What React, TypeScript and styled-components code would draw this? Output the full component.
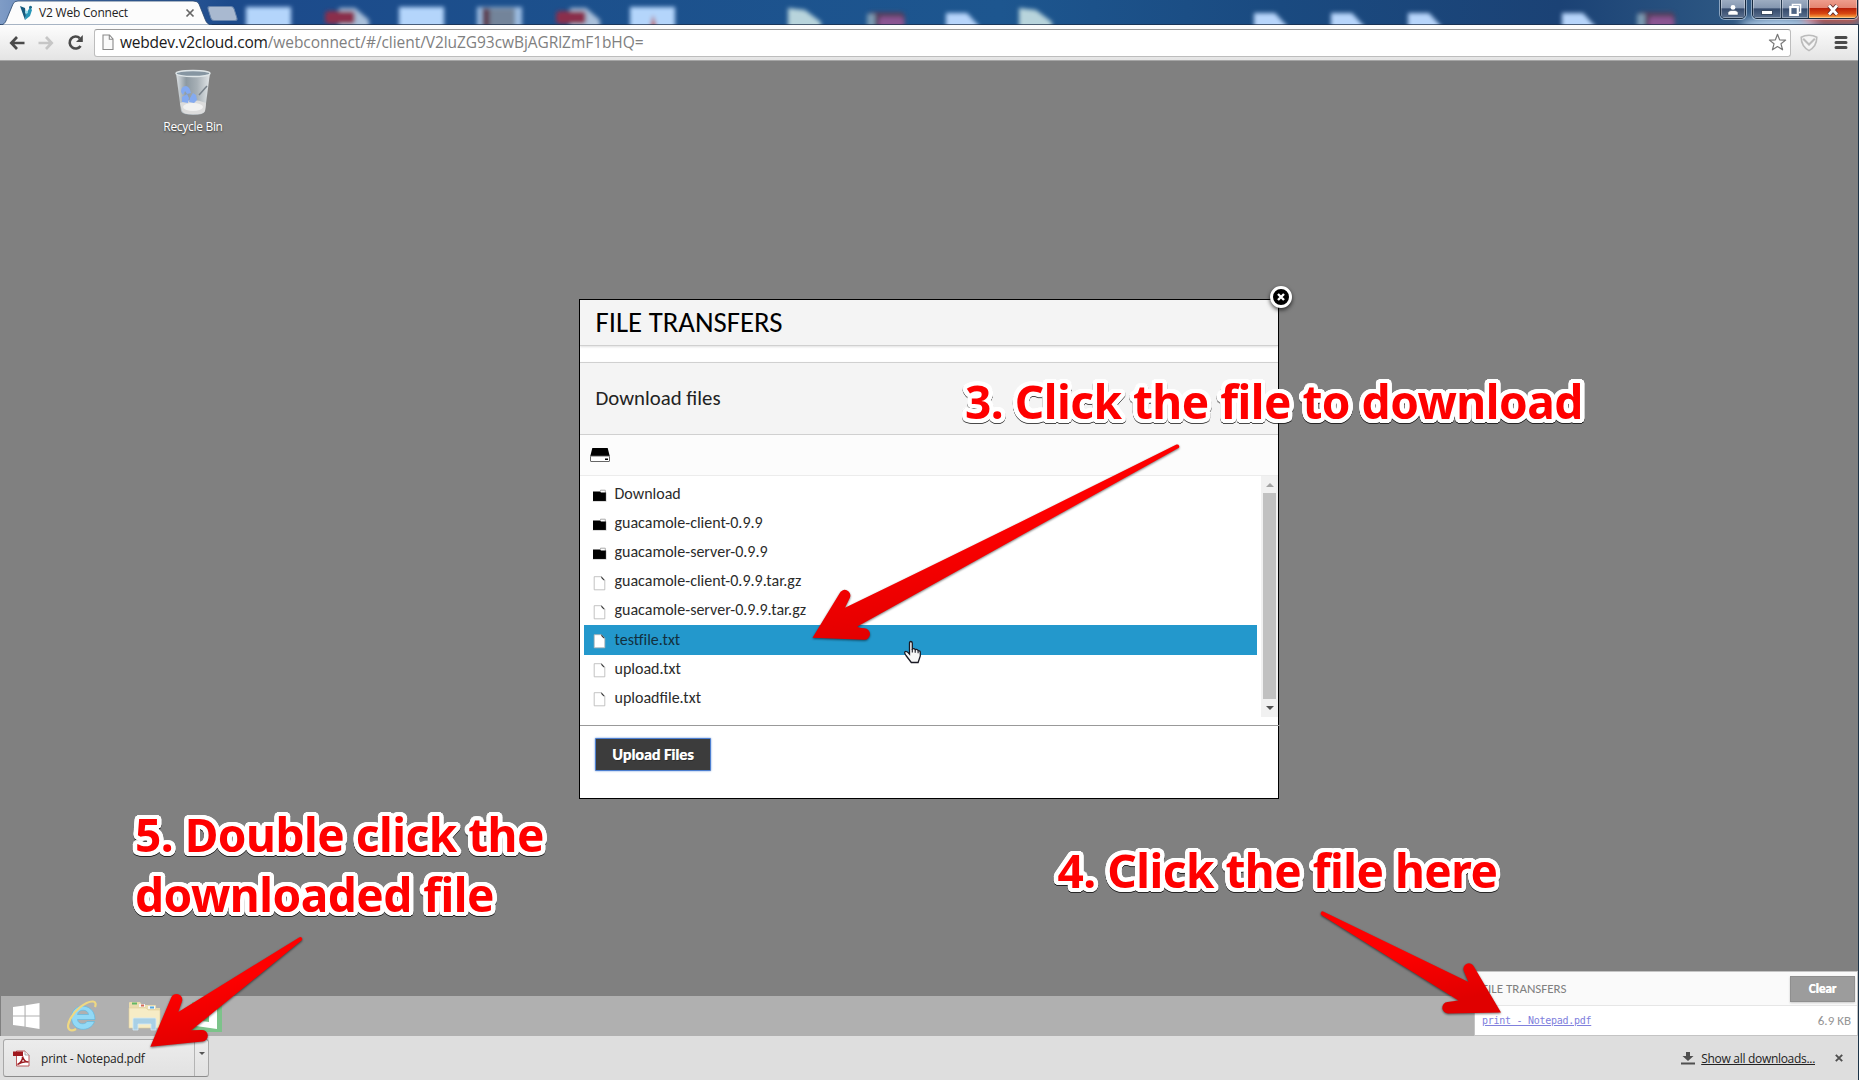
import React from 'react';
import styled, { createGlobalStyle } from 'styled-components';

const ui = '"Open Sans", "Noto Sans", sans-serif';
const lato = 'Carlito, Lato, sans-serif';

const GlobalStyle = createGlobalStyle`
  *, *::before, *::after { box-sizing: border-box; }
  body { margin: 0; overflow: hidden; }
`;

const BrowserWindow = styled.div`
  position: relative;
  display: flex;
  flex-direction: column;
  width: 1859px;
  height: 1080px;
  overflow: hidden;
  background: #1b3348;
  font-family: ${ui};
`;

/* ---------- title bar ---------- */

const TitleBar = styled.header`
  position: relative;
  display: flex;
  align-items: flex-start;
  flex: 0 0 25px;
  overflow: hidden;
  background: linear-gradient(90deg, #7f9cc6 0, #3f68a6 90px, #1c4a8b 230px, #1c4f8c 500px, #1d568f 1000px, #1a4a80 1280px, #1b4275 1560px, #2c5682 1720px, #56708c 1859px);
`;

const Wallpaper = styled.svg`
  position: absolute;
  inset: 0;
`;

const Tab = styled.div`
  position: relative;
  display: flex;
  align-items: center;
  width: 212px;
  height: 25px;
  padding: 0 17px 0 19px;
`;

const TabShape = styled.svg`
  position: absolute;
  left: 0;
  top: 0;
`;

const TabTitle = styled.span`
  position: relative;
  flex: 1;
  margin-left: 4px;
  color: #222;
  font-size: 12px;
  letter-spacing: -0.2px;
  white-space: nowrap;
`;

const TabIcon = styled.svg`
  position: relative;
  flex: none;
`;

const NewTab = styled.div`
  position: relative;
  width: 27px;
  height: 15px;
  margin: 6px 0 0 -3px;
  border: 1px solid #6884ab;
  border-radius: 3px;
  background: #a9b9d0;
  transform: skewX(17deg);
`;

const WindowControls = styled.div`
  position: relative;
  display: flex;
  gap: 6px;
  margin: -3px 1px 0 auto;
`;

const ControlGroup = styled.div`
  display: flex;
  height: 22px;
  overflow: hidden;
  border: 1px solid #17293e;
  border-radius: 0 0 5px 5px;
  box-shadow: 0 0 0 1px rgba(220, 232, 245, 0.55);
`;

const Control = styled.div<{ $width: number; $danger?: boolean }>`
  display: grid;
  place-items: center;
  width: ${(p) => p.$width}px;
  padding-top: 3px;
  border-right: 1px solid #25394f;
  box-shadow: inset 0 0 0 1px rgba(255, 255, 255, 0.35);
  background: ${(p) =>
    p.$danger
      ? 'linear-gradient(#f0a394 0, #e58572 48%, #b91f08 52%, #d84812 78%, #ffb24a 100%)'
      : 'linear-gradient(#a3b2c6 0, #8496b0 50%, #34496b 54%, #5b718f 100%)'};
  &:last-child { border-right: 0; }
`;

/* ---------- toolbar ---------- */

const Toolbar = styled.div`
  display: flex;
  align-items: center;
  flex: 0 0 36px;
  padding: 0 10px 0 9px;
  margin-right: 1px;
  border-bottom: 1px solid #a5a5a5;
  background: linear-gradient(#fdfdfd, #e4e4e4);
`;

const NavButtons = styled.div`
  display: flex;
  align-items: center;
  gap: 13px;
  width: 85px;
`;

const AddressBar = styled.div`
  display: flex;
  align-items: center;
  flex: 1;
  height: 28px;
  padding: 0 3px 0 7px;
  border: 1px solid #bdbdbd;
  border-top-color: #9a9a9a;
  border-radius: 3px;
  background: #fff;
`;

const Url = styled.div`
  flex: 1;
  margin: 0 0 1px 6px;
  color: #808080;
  font-size: 15.5px;
  letter-spacing: -0.06px;
  white-space: nowrap;
`;

const Host = styled.span`
  color: #1a1a1a;
  letter-spacing: -0.22px;
`;

const ToolbarIcons = styled.div`
  display: flex;
  align-items: center;
  gap: 16px;
  margin-left: 9px;
`;

/* ---------- remote desktop ---------- */

const Desktop = styled.main`
  position: relative;
  display: flex;
  flex-direction: column;
  justify-content: space-between;
  flex: 1;
  margin-right: 1px;
  background: #808080;
`;

const DesktopIcon = styled.div`
  display: flex;
  flex-direction: column;
  align-items: center;
  gap: 1px;
  width: 90px;
  margin: 8px 0 0 148px;
`;

const DesktopIconLabel = styled.span`
  color: #fff;
  font-size: 12px;
  line-height: 17px;
  letter-spacing: -0.3px;
  text-shadow: 0 1px 2px rgba(0, 0, 0, 0.6);
`;

const Taskbar = styled.div`
  display: flex;
  align-items: center;
  height: 40px;
  margin-left: 1px;
  padding-left: 12px;
  background: #b0b0b0;
`;

const TaskIcon = styled.svg<{ $after: number }>`
  flex: none;
  margin-right: ${(p) => p.$after}px;
`;

const ModalLayer = styled.div`
  position: absolute;
  inset: 0;
  display: grid;
  place-items: center;
`;

const Modal = styled.section`
  position: relative;
  display: flex;
  flex-direction: column;
  width: 700px;
  height: 500px;
  border: 1px solid #000;
  background: #fff;
  font-family: ${lato};
`;

const CloseBadge = styled.div`
  position: absolute;
  top: -14px;
  right: -14px;
  display: grid;
  place-items: center;
  width: 22px;
  height: 22px;
  border: 3px solid #fff;
  border-radius: 50%;
  background: #000;
  box-shadow: 0 2px 4px rgba(0, 0, 0, 0.7);
`;

const ModalHeader = styled.div`
  display: flex;
  align-items: center;
  flex: 0 0 46px;
  padding-left: 15.5px;
  border-bottom: 1px solid #d0d0d0;
  background: #f4f4f4;
  box-shadow: 0 1px 2px rgba(0, 0, 0, 0.12);
  color: #000;
  font-size: 28.8px;
`;

const SectionHeader = styled.div`
  display: flex;
  align-items: center;
  flex: 0 0 73px;
  margin-top: 16px;
  padding-left: 15.5px;
  border: solid #d0d0d0;
  border-width: 1px 0;
  background: #f4f4f4;
  box-shadow: 0 1px 2px rgba(0, 0, 0, 0.12);
  color: #222;
  font-size: 20.8px;
`;

const Breadcrumb = styled.div`
  display: flex;
  align-items: center;
  flex: 0 0 41px;
  padding-left: 10px;
  border-bottom: 1px solid #ececec;
  background: #fcfcfc;
`;

const ListArea = styled.div`
  display: flex;
  flex: 0 0 240px;
`;

const FileList = styled.ul`
  flex: 1;
  margin: 0;
  padding: 4px;
  list-style: none;
`;

const FileRow = styled.li<{ $active?: boolean }>`
  display: flex;
  align-items: center;
  gap: 8px;
  height: 29.2px;
  padding: 0 0 0 7.5px;
  background: ${(p) => (p.$active ? '#2398cc' : 'transparent')};
  color: ${(p) => (p.$active ? '#12303f' : '#2b2b2b')};
  font-size: 16px;
  & > svg { margin-top: 2px; }
`;

const FileName = styled.span`
  padding-bottom: 2px;
`;

const Scrollbar = styled.div`
  display: flex;
  flex-direction: column;
  align-items: center;
  width: 17px;
  background: #f1f1f1;
`;

const ScrollArrow = styled.div<{ $down?: boolean }>`
  flex: 0 0 17px;
  display: grid;
  place-items: center;
  padding: ${(p) => (p.$down ? '0 0 2px' : '2px 0 0')};
  &::after {
    content: '';
    border: solid transparent;
    border-width: ${(p) => (p.$down ? '4px 4px 0' : '0 4px 4px')};
    ${(p) => (p.$down ? 'border-top-color: #505050;' : 'border-bottom-color: #a3a3a3;')}
  }
`;

const ScrollThumb = styled.div`
  flex: 1;
  width: 13px;
  margin-bottom: 1px;
  background: #c1c1c1;
`;

const ModalFooter = styled.div`
  flex: 1;
  margin: 8px -2px 0 0;
  padding: 12px 15px;
  border-top: 1px solid #999;
`;

const UploadButton = styled.button`
  display: block;
  width: 116px;
  height: 33px;
  padding: 0;
  border: 1px solid #4d7fd0;
  border-radius: 1px;
  background: #3c3c3c;
  box-shadow: 0 0 2px #5a8ad6;
  color: #fff;
  font: bold 16px ${lato};
  text-shadow: 1px 1px 0 rgba(0, 0, 0, 0.3), 0.4px 0 0 #fff;
`;

const TransferPanel = styled.aside`
  position: absolute;
  right: 0;
  bottom: 0;
  width: 384px;
  height: 65px;
  border: 1px solid #c4c4c4;
  background: #fff;
  font-family: ${lato};
`;

const TransferHeader = styled.div`
  display: flex;
  align-items: center;
  justify-content: space-between;
  height: 34px;
  padding: 0 2px 0 7px;
  border-bottom: 1px solid #e6e6e6;
  background: #fafafa;
  color: #808080;
  font-size: 13px;
`;

const ClearButton = styled.button`
  width: 65px;
  height: 26px;
  padding: 0;
  border: 1px solid #8f8f8f;
  background: #9c9c9c;
  box-shadow: 0 1px 2px rgba(0, 0, 0, 0.2);
  color: #fff;
  font: bold 13px ${lato};
  text-shadow: 0.4px 0 0 #fff;
`;

const TransferRow = styled.div`
  display: flex;
  align-items: center;
  justify-content: space-between;
  height: 28px;
  padding: 0 6px 0 7px;
  color: #959595;
  font-size: 13px;
`;

const TransferLink = styled.a`
  margin-top: 2px;
  color: #8080dd;
  font: 10px/14px "DejaVu Sans Mono", monospace;
  letter-spacing: -0.27px;
  text-decoration: underline;
`;

/* ---------- download shelf ---------- */

const Shelf = styled.footer`
  display: flex;
  align-items: center;
  flex: 0 0 44px;
  margin-right: 1px;
  padding: 0 15px 0 3px;
  background: #dedede;
`;

const ShelfItem = styled.div`
  display: flex;
  align-items: center;
  width: 206px;
  height: 38px;
  padding-left: 9px;
  border: 1px solid #a8a8a8;
  border-bottom-color: #8c8c8c;
  border-radius: 3px;
  background: linear-gradient(#ececec, #e2e2e2);
`;

const ShelfName = styled.span`
  flex: 1;
  margin-left: 11px;
  color: #222;
  font-size: 12px;
  letter-spacing: -0.2px;
`;

const ShelfMenu = styled.div`
  align-self: stretch;
  display: grid;
  justify-items: center;
  width: 14px;
  padding-top: 12px;
  border-left: 1px solid #b4b4b4;
  &::after {
    content: '';
    height: 0;
    border: solid transparent;
    border-width: 3px 3px 0;
    border-top-color: #555;
  }
`;

const ShowAll = styled.a`
  margin: 0 20px 0 6px;
  color: #222;
  font-size: 12px;
  letter-spacing: -0.3px;
  text-decoration: underline;
`;

const Spacer = styled.div`
  flex: 1;
`;

/* ---------- annotations ---------- */

/* Ring of white shadows: an outline with rounded corners around each glyph. */
const ring = (radius: number, steps: number) =>
  Array.from({ length: steps }, (_, i) => {
    const a = (i / steps) * Math.PI * 2;
    return `${(Math.cos(a) * radius).toFixed(2)}px ${(Math.sin(a) * radius).toFixed(2)}px 0 #fff`;
  }).join(', ');

const Callout = styled.div<{ $x: number; $y: number }>`
  position: absolute;
  left: ${(p) => p.$x}px;
  top: ${(p) => p.$y}px;
  color: #fe0000;
  font: bold 46px/60px "Noto Sans", "Open Sans", sans-serif;
  letter-spacing: -0.5px;
  white-space: pre;
  text-shadow: ${ring(2.2, 12)}, ${ring(4.4, 28)};
  filter: drop-shadow(0.3px 1.2px 0.6px rgba(0, 0, 0, 0.7));
`;

const Arrows = styled.svg`
  position: absolute;
  inset: 0;
  filter: drop-shadow(0.5px 1px 0.8px rgba(0, 0, 0, 0.55));
`;

const Pointer = styled.svg`
  position: absolute;
  left: 903px;
  top: 640px;
`;

const squares = [246, 399, 630];
const sheets = [946, 1254, 1331, 1408, 1562];
const files = [
  { name: 'Download', folder: true },
  { name: 'guacamole-client-0.9.9', folder: true },
  { name: 'guacamole-server-0.9.9', folder: true },
  { name: 'guacamole-client-0.9.9.tar.gz' },
  { name: 'guacamole-server-0.9.9.tar.gz' },
  { name: 'testfile.txt', active: true },
  { name: 'upload.txt' },
  { name: 'uploadfile.txt' },
];

function BlurredIcons() {
  return (
    <Wallpaper width="1859" height="25">
      <defs>
        <filter id="soft" x="-20%" y="-50%" width="140%" height="200%"><feGaussianBlur stdDeviation="2" /></filter>
        <filter id="glow" x="-50%" y="-100%" width="200%" height="300%"><feGaussianBlur stdDeviation="5" /></filter>
      </defs>
      <g filter="url(#soft)">
        {squares.map((x) => <rect key={x} x={x} y="7" width="45" height="22" fill="#b4d5fb" />)}
        <path d="M650 28l3-13 4 13z" fill="#b85a5a" />
        {[339, 570].map((x) => (
          <g key={x}>
            <path d={`M${x} 8h16l14 12v9h-30z`} fill="#a9c0da" />
            <rect x={x - 14} y="11" width="30" height="13" rx="4" fill="#8a2f4c" />
          </g>
        ))}
        <rect x="477" y="7" width="45" height="22" fill="#9dbde2" />
        <rect x="484" y="8" width="31" height="20" fill="#73849a" />
        <rect x="482" y="8" width="8" height="20" fill="#5d4254" />
        {[788, 1019].map((x) => <path key={x} d={`M${x} 8l17 2 16 12v8h-33z`} fill="#b8d4dc" />)}
        {sheets.map((x) => <path key={x} d={`M${x} 13h21l12 13v4h-33z`} fill="#b7d5fb" />)}
        {[867, 1637].map((x) => (
          <g key={x}>
            <rect x={x} y="12" width="38" height="18" rx="5" fill="#54405f" />
            <rect x={x + 12} y="17" width="25" height="12" rx="4" fill="#8b5593" />
            <rect x={x} y="14" width="8" height="14" fill="#7a9ab2" />
          </g>
        ))}
      </g>
      <g filter="url(#glow)">
        <ellipse cx="1778" cy="25" rx="38" ry="7" fill="#b5d2ee" />
        <rect x="1804" y="-5" width="55" height="28" rx="6" fill="#f04a30" opacity=".8" />
      </g>
      <rect y="24" width="1859" height="1" fill="#1a2b45" opacity=".7" />
    </Wallpaper>
  );
}

function FolderIcon() {
  return (
    <svg width="15" height="14" viewBox="0 0 15 14">
      <path d="M8.5 3.5V2.2h4.8v3" fill="#fff" stroke="#aaa" />
      <path d="M1 3.5h7l1 1h5V13H1z" fill="#000" />
      <path d="M.8 13.4h13.4V4.5" fill="none" stroke="#aaa" strokeWidth=".5" />
    </svg>
  );
}

function FileIcon() {
  return (
    <svg width="15" height="16" viewBox="0 0 15 16">
      <path d="M2.2 1.7h7.3l3.3 3.6v9.5H2.2z" fill="#fff" stroke="#b4b4b4" strokeWidth=".8" />
      <path d="M9.3 1.3l3.5 3.9h-1.300L9.3 3z" fill="#333" />
    </svg>
  );
}

export default function App() {
  return (
    <BrowserWindow>
      <GlobalStyle />
      <TitleBar>
        <BlurredIcons />
        <Tab>
          <TabShape width="214" height="25">
            <path d="M0 25C5 25 6 21 8 16L13 4Q14 1 18 1H193Q198 1 199 4L205 19Q207 25 212 25z" fill="#fcfcfc" stroke="#27466f" strokeWidth=".8" />
          </TabShape>
          <TabIcon width="16" height="17" viewBox="0 0 16 17">
            <path d="M1 2l5 2 1 8-1 4z" fill="#155a7d" />
            <path d="M6 16l1-6 4-7 2 3-2 6z" fill="#2796b8" />
            <circle cx="11.5" cy="3.2" r="1.5" fill="#1b6789" />
            <circle cx="7.5" cy="8" r="1.5" fill="#9be0ee" />
          </TabIcon>
          <TabTitle>V2 Web Connect</TabTitle>
          <TabIcon width="10" height="10" viewBox="0 0 10 10">
            <path d="M1.5 1.5l7 7m0-7l-7 7" stroke="#666" strokeWidth="1.7" />
          </TabIcon>
        </Tab>
        <NewTab />
        <WindowControls>
          <ControlGroup>
            <Control $width={24}>
              <svg width="12" height="12" viewBox="0 0 12 12">
                <circle cx="6" cy="3.4" r="2.4" fill="#fff" />
                <path d="M1 11V8.5Q2 6.6 4 6.500h4q2 .1 3 2V11z" fill="#fff" stroke="#33445c" strokeWidth=".5" />
              </svg>
            </Control>
          </ControlGroup>
          <ControlGroup>
            <Control $width={29}>
              <svg width="14" height="12"><rect x="1.5" y="6.5" width="11" height="4" fill="#fff" stroke="#3a4a60" /></svg>
            </Control>
            <Control $width={27}>
              <svg width="14" height="14" viewBox="0 0 14 14">
                <path d="M4.500 3V1.500h8v8H11" fill="none" stroke="#fff" strokeWidth="1.600" />
                <rect x="2.3" y="4" width="7.5" height="8" fill="#4e6484" stroke="#fff" strokeWidth="2.200" />
              </svg>
            </Control>
            <Control $width={48} $danger>
              <svg width="14" height="12" viewBox="0 0 14 12">
                <path d="M3 1.500l8 9m0-9l-8 9" stroke="#5b2a2a" strokeWidth="4.400" />
                <path d="M3 1.500l8 9m0-9l-8 9" stroke="#fff" strokeWidth="2.800" />
              </svg>
            </Control>
          </ControlGroup>
        </WindowControls>
      </TitleBar>

      <Toolbar>
        <NavButtons>
          <svg width="16" height="16" viewBox="0 0 16 16"><path d="M8 2L2.3 8 8 14M2.5 8H15.5" fill="none" stroke="#4a4a4a" strokeWidth="2.7" /></svg>
          <svg width="16" height="16" viewBox="0 0 16 16"><path d="M8 2l5.7 6L8 14M13.5 8H.5" fill="none" stroke="#c6c6c6" strokeWidth="2.7" /></svg>
          <svg width="17" height="17" viewBox="0 0 17 17">
            <path d="M13.6 12A6 6 0 1 1 12.8 4.2" fill="none" stroke="#4a4a4a" strokeWidth="2.6" />
            <path d="M15.8 1v7H9z" fill="#4a4a4a" />
          </svg>
        </NavButtons>
        <AddressBar>
          <svg width="12" height="17" viewBox="0 0 12 17"><path d="M1 1h6.500L11 5v10.500H1zM7.300 1v4.200H11" fill="#fafafa" stroke="#8a8a8a" strokeWidth="1.100" /></svg>
          <Url><Host>webdev.v2cloud.com</Host>/webconnect/#/client/V2luZG93cwBjAGRlZmF1bHQ=</Url>
          <svg width="19" height="19" viewBox="0 0 19 19">
            <path d="M9.500 1.300l2.100 5.500 6 .3-4.600 3.700 1.600 6-5.100-3.300-5.100 3.300 1.600-6L1.400 7.100l6-.3z" fill="#fff" stroke="#777" strokeWidth="1.200" strokeLinejoin="round" />
          </svg>
        </AddressBar>
        <ToolbarIcons>
          <svg width="18" height="18" viewBox="0 0 18 18">
            <path d="M9 1.200C12 1.200 14.800 2 16.800 3.200 16.800 9 14 13.800 9 16.600 4 13.800 1.200 9 1.200 3.200 3.200 2 6 1.200 9 1.200z" fill="#f4f4f4" stroke="#bbb" strokeWidth="1.600" />
            <path d="M3.200 4.800L9 10.500l5.800-5.700" fill="none" stroke="#bbb" strokeWidth="2" />
          </svg>
          <svg width="14" height="15" viewBox="0 0 14 15"><path d="M2 2.500h10m-10 5h10m-10 5h10" stroke="#4a4a4a" strokeWidth="3" strokeLinecap="round" /></svg>
        </ToolbarIcons>
      </Toolbar>

      <Desktop>
        <DesktopIcon>
          <svg width="38" height="48" viewBox="0 0 38 48">
            <defs><linearGradient id="glass"><stop offset="0" stopColor="#dde2e5" /><stop offset=".3" stopColor="#8d99a1" /><stop offset=".62" stopColor="#a7b0b6" /><stop offset="1" stopColor="#e2e6e8" /></linearGradient></defs>
            <path d="M2 4l5 38q1 4 12 4t12-4l5-38z" fill="url(#glass)" />
            <ellipse cx="19" cy="4.5" rx="17" ry="3" fill="#8696a2" stroke="#dfe6e8" strokeWidth="1.4" />
            <path d="M6 34q12-6 26 0l-1 8q-2 3.500-12 3.500T8 42z" fill="#dcdcdc" />
            <ellipse cx="19" cy="38" rx="10" ry="4" fill="#f1f1f1" />
            <path d="M7 23q0-6 5-6 4 1 5 7l-4 1-2-3-2 4zM8 28l5-3 2 4-1 5-6-1zM15 33l1-4 3-5 3 2 1 5-3 3z" fill="#84aaf0" />
            <path d="M25 26l8-9" stroke="#77818a" strokeWidth="1.500" />
          </svg>
          <DesktopIconLabel>Recycle Bin</DesktopIconLabel>
        </DesktopIcon>
        <Taskbar>
          <TaskIcon $after={27} width="27" height="26" viewBox="0 0 27 26">
            <path d="M0 4l11.500-1.600v10H0zm12.600-1.800L26.500 0v12.400H12.600zM0 13.600h11.500v10L0 22zm12.600 0h13.900V26l-13.900-2.200z" fill="#fff" />
          </TaskIcon>
          <TaskIcon $after={31} width="30" height="32" viewBox="0 0 30 32">
            <path d="M28 19.500H10.500c.4 5 7.500 5.500 9.500 2h7.500C23.500 33 4.500 32 4.500 17.500 4.500 2 28 2 28 19.500zM10.500 14.500h11c-.5-5.500-10-6-11 0z" fill="#92d9f6" stroke="#63b8de" strokeWidth=".7" />
            <path d="M9 29C4 32-1 30 2 22 6 11 19 1 26 1.500c3 .3 3 3 2 5.500" fill="none" stroke="#efd882" strokeWidth="2.200" />
          </TaskIcon>
          <TaskIcon $after={31} width="33" height="30" viewBox="0 0 33 30">
            <path d="M1 4V2q0-1 1-1h10l2 3h13q1 0 1 1v2h4v20H1z" fill="#eadcae" />
            <rect x="4" y="1.500" width="5" height="2" fill="#61b765" />
            <path d="M11 3h6v3h-6zm9 2h7v3h-7z" fill="#f5f5f5" />
            <rect x="13" y="3.500" width="3" height="2" fill="#d66a58" /><rect x="22" y="5.500" width="4" height="2" fill="#58a9dc" />
            <path d="M1 7h17l2 2h12v18H1z" fill="#f6ecc6" stroke="#e2d29c" strokeWidth=".6" />
            <path d="M5 29V18q0-1 1-1h21q1 0 1 1v11h-5v-6H10v6z" fill="#a9d0e6" stroke="#d5ebf6" strokeWidth=".8" />
          </TaskIcon>
          <TaskIcon $after={0} width="30" height="31" viewBox="0 0 30 31">
            <rect y="1" width="30" height="30" fill="#7cc38a" />
            <path d="M4 9l21-2v21L4 25z" fill="#fff" />
            <path d="M10 7q1-6 5-5t5 4" fill="none" stroke="#fff" strokeWidth="1.500" />
            <path d="M9 14l8-1v8l-8-1z" fill="#7cc38a" />
          </TaskIcon>
        </Taskbar>

        <ModalLayer>
          <Modal>
            <ModalHeader>FILE TRANSFERS</ModalHeader>
            <SectionHeader>Download files</SectionHeader>
            <Breadcrumb>
              <svg width="20" height="16" viewBox="0 0 20 16">
                <path d="M2.300 1h15.400l2 8H.300z" fill="#000" />
                <rect x=".5" y="9" width="19" height="5.500" rx=".5" fill="#fff" stroke="#555" strokeWidth=".9" />
                <rect x="15" y="11.500" width="3" height="1.500" fill="#000" />
              </svg>
            </Breadcrumb>
            <ListArea>
              <FileList>
                {files.map((f) => (
                  <FileRow key={f.name} $active={f.active}>
                    {f.folder ? <FolderIcon /> : <FileIcon />}
                    <FileName>{f.name}</FileName>
                  </FileRow>
                ))}
              </FileList>
              <Scrollbar>
                <ScrollArrow />
                <ScrollThumb />
                <ScrollArrow $down />
              </Scrollbar>
            </ListArea>
            <ModalFooter>
              <UploadButton>Upload Files</UploadButton>
            </ModalFooter>
            <CloseBadge>
              <svg width="8" height="8" viewBox="0 0 8 8"><path d="M1 1l6 6m0-6L1 7" stroke="#fff" strokeWidth="2.400" /></svg>
            </CloseBadge>
          </Modal>
        </ModalLayer>

        <TransferPanel>
          <TransferHeader>
            FILE TRANSFERS
            <ClearButton>Clear</ClearButton>
          </TransferHeader>
          <TransferRow>
            <TransferLink>print - Notepad.pdf</TransferLink>
            6.9 KB
          </TransferRow>
        </TransferPanel>
      </Desktop>

      <Shelf>
        <ShelfItem>
          <svg width="17" height="17" viewBox="0 0 17 17">
            <path d="M3.500 1h8.500l4 4v11H3.500z" fill="#fff" stroke="#b4474a" strokeWidth=".9" />
            <path d="M12 1v4h4" fill="#eee" stroke="#999" strokeWidth=".8" />
            <rect y="1.500" width="10" height="4.500" fill="#a0191f" />
            <path d="M4.500 14.500C8 13 10 9 9.500 6.500c1 4 3 5.500 6 5.500-4-1-8 .5-11 2.500z" fill="none" stroke="#9c1d22" strokeWidth="1.500" />
          </svg>
          <ShelfName>print - Notepad.pdf</ShelfName>
          <ShelfMenu />
        </ShelfItem>
        <Spacer />
        <svg width="14" height="14" viewBox="0 0 14 14"><path d="M5 1h4v4h3.500L7 10 1.500 5H5zM0 11.500h14v2H0z" fill="#4f4f4f" /></svg>
        <ShowAll>Show all downloads...</ShowAll>
        <svg width="8" height="8" viewBox="0 0 8 8"><path d="M.8.8l6.400 6.400m0-6.400L.8 7.200" stroke="#4f4f4f" strokeWidth="1.900" /></svg>
      </Shelf>

      <Pointer width="19" height="25" viewBox="0 0 19 25">
        <path d="M6.500 14V3.200q0-1.700 1.300-1.700t1.500 1.700V9q1.800-1 3 .6 2-.8 2.900 1 2-.2 2.100 2V16l-2.200 6.500H8.300L3 15.500q-2-3-1-3.800 1.500-1 4.500 2.300z" fill="#f7f7f7" stroke="#1a1a24" strokeWidth="1.300" />
        <path d="M9.300 9v3.500M12.200 9.800v2.900M15.100 10.800v2.400" stroke="#1a1a24" strokeWidth="1.100" />
      </Pointer>

      <Arrows width="1859" height="1080">
        <defs>
          <linearGradient id="red" x1="0" y1="0" x2=".3" y2="1"><stop offset=".5" stopColor="#fe0000" /><stop offset="1" stopColor="#e00000" /></linearGradient>
        </defs>
        <g fill="url(#red)">
          <path d="M1176.500 444.600A1.800 1.800 0 0 1 1178 448.300L857.300 626.600Q859 628.300 864.500 628.300A5.600 5.600 0 0 1 864 639.800L812.500 637.800 839.500 593.500A5.500 5.500 0 0 1 850 597.500L845 607.700Q975 545 1176.500 444.600z" />
          <path d="M299.500 937.300A1.900 1.900 0 0 1 301.500 940.500L191.300 1030.300 201.500 1030A5.700 5.700 0 0 1 202.500 1041.500L150.300 1046.800 171 998A5.700 5.700 0 0 1 182 1001.500L178.300 1011.900z" />
          <path d="M1323.700 911.700A1.900 1.900 0 0 0 1321.800 915.300L1458.500 1000.500 1447.500 1002A5.700 5.700 0 0 0 1448.500 1013.400L1501 1012.500 1474 966.800A5.500 5.500 0 0 0 1463.800 971L1468.500 982z" />
        </g>
      </Arrows>
      <Callout $x={965} $y={371}>3. Click the file to download</Callout>
      <Callout $x={1057.500} $y={839.500}>4. Click the file here</Callout>
      <Callout $x={135} $y={803.500}>{'5. Double click the\ndownloaded file'}</Callout>
    </BrowserWindow>
  );
}
